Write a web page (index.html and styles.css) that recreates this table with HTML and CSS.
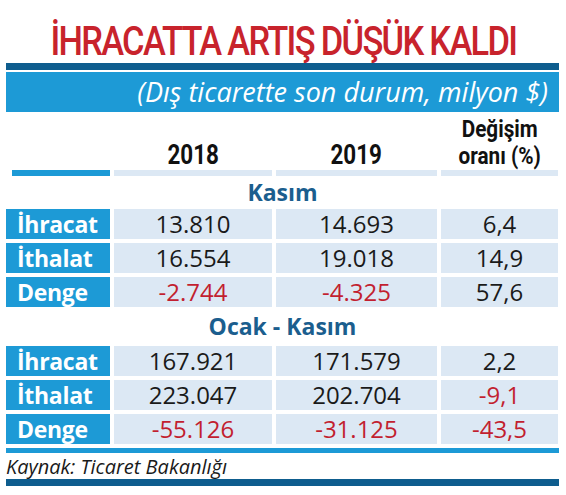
FILE: index.html
```html
<!DOCTYPE html>
<html lang="tr">
<head>
    <meta charset="UTF-8">
    <meta name="viewport" content="width=device-width, initial-scale=1.0">
    <title>İhracatta artış düşük kaldı</title>
    <link rel="stylesheet" href="styles.css">
</head>
<body>
    <h1 class="title"><span>İHRACATTA ARTIŞ DÜŞÜK KALDI</span></h1>
    <div class="sheet">
        <div class="rule-dark"></div>
        <div class="band">(Dış ticarette son durum, milyon $)</div>

        <div class="grid head">
            <div></div>
            <div class="yr"><span>2018</span></div>
            <div class="yr"><span>2019</span></div>
            <div class="yr small"><span>Değişim<br>oranı (%)</span></div>
            <div class="bar first"></div>
            <div class="bar"></div>
            <div class="bar"></div>
            <div class="bar"></div>
        </div>

        <h2 class="section">Kasım</h2>
        <div class="grid rows">
            <div class="lbl">İhracat</div>
            <div class="num">13.810</div>
            <div class="num">14.693</div>
            <div class="num">6,4</div>

            <div class="lbl">İthalat</div>
            <div class="num">16.554</div>
            <div class="num">19.018</div>
            <div class="num">14,9</div>

            <div class="lbl">Denge</div>
            <div class="num neg">-2.744</div>
            <div class="num neg">-4.325</div>
            <div class="num">57,6</div>
        </div>

        <h2 class="section tall">Ocak - Kasım</h2>
        <div class="grid rows">
            <div class="lbl">İhracat</div>
            <div class="num">167.921</div>
            <div class="num">171.579</div>
            <div class="num">2,2</div>

            <div class="lbl">İthalat</div>
            <div class="num">223.047</div>
            <div class="num">202.704</div>
            <div class="num neg">-9,1</div>

            <div class="lbl">Denge</div>
            <div class="num neg">-55.126</div>
            <div class="num neg">-31.125</div>
            <div class="num neg">-43,5</div>
        </div>

        <div class="rule-blue"></div>
        <p class="source">Kaynak: Ticaret Bakanlığı</p>
        <div class="rule-dark"></div>
    </div>
</body>
</html>
```

FILE: styles.css
```css
body {
    margin: 0;
    background-color: white;
    font-family: "Open Sans", Arial, sans-serif;
    color: #1a1a1a;
}

.sheet {
    width: 553px;
    padding-left: 6px;
}

/* başlık: dar yazı yok, scaleX ile daraltıldı */
.title {
    margin: 0;
    height: 63px;
    display: flex;
    justify-content: center;
    font-family: Roboto, Arial, sans-serif;
    font-weight: 500;
    font-size: 41px;
    letter-spacing: -2px;
    line-height: 82px;
    color: #c8232c;
    white-space: nowrap;
}

.title span {
    display: inline-block;
    transform: scaleX(0.84);
}

.rule-dark {
    height: 7px;
    background-color: #0e5d8e;
}

.band {
    margin-top: 2px;
    height: 40px;
    background-color: #1d9ad6;
    color: white;
    font-style: italic;
    font-size: 27px;
    line-height: 40px;
    text-align: right;
    padding-right: 11px;
    white-space: nowrap;
}

.grid {
    display: grid;
    grid-template-columns: 104px 158px 161px 117px;
    column-gap: 4px;
}

.yr {
    height: 58px;
    display: flex;
    align-items: flex-end;
    justify-content: center;
    font-family: Roboto, Arial, sans-serif;
    font-weight: 700;
    font-size: 28px;
    line-height: 30px;
    text-align: center;
    color: #111;
    box-sizing: border-box;
}

.yr span {
    display: inline-block;
    transform: scaleX(0.8);
}

.yr.small {
    font-size: 23px;
    line-height: 27px;
    padding-bottom: 0;
}

.yr.small span {
    transform: scaleX(0.9);
}

.bar {
    height: 6px;
    background-color: #dce8f4;
}

.bar.first {
    margin-left: 6px;
    background-color: #1d9ad6;
}

.section {
    margin: 0;
    height: 33px;
    line-height: 33px;
    text-align: center;
    font-size: 23px;
    font-weight: 700;
    color: #1b5e8e;
}

.section.tall {
    height: 39px;
    line-height: 39px;
}

.rows {
    row-gap: 4px;
}

.lbl {
    height: 30px;
    background-color: #1d9ad6;
    color: white;
    font-weight: 700;
    font-size: 23px;
    line-height: 30px;
    padding-left: 11px;
    letter-spacing: -0.3px;
}

.num {
    height: 30px;
    background-color: #dce8f4;
    font-size: 24px;
    line-height: 30px;
    text-align: center;
}

.neg {
    color: #c21f30;
}

.rule-blue {
    margin-top: 4px;
    height: 5px;
    background-color: #1d9ad6;
}

.source {
    margin: 0;
    height: 26px;
    line-height: 28px;
    font-style: italic;
    font-size: 20px;
}
```
